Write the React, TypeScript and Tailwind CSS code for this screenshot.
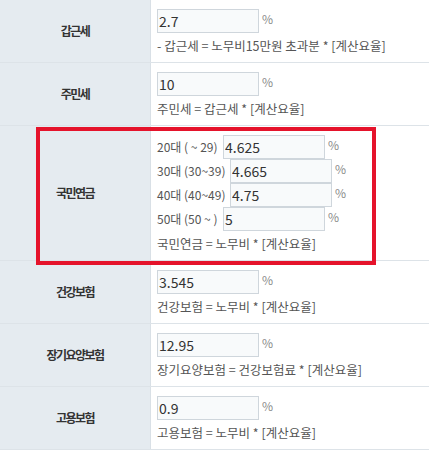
import React from "react";

type Row = {
  label: string;
  value?: string;
  rates?: { age: string; value: string; wide?: boolean }[];
  note: string;
};

const rows: Row[] = [
  { label: "갑근세", value: "2.7", note: "- 갑근세 = 노무비15만원 초과분 * [계산요율]" },
  { label: "주민세", value: "10", note: "주민세 = 갑근세 * [계산요율]" },
  {
    label: "국민연금",
    rates: [
      { age: "20대 ( ~ 29)", value: "4.625" },
      { age: "30대 (30~39)", value: "4.665", wide: true },
      { age: "40대 (40~49)", value: "4.75", wide: true },
      { age: "50대 (50 ~ )", value: "5" },
    ],
    note: "국민연금 = 노무비 * [계산요율]",
  },
  { label: "건강보험", value: "3.545", note: "건강보험 = 노무비 * [계산요율]" },
  { label: "장기요양보험", value: "12.95", note: "장기요양보험 = 건강보험료 * [계산요율]" },
  { label: "고용보험", value: "0.9", note: "고용보험 = 노무비 * [계산요율]" },
];

function RateInput({ value }: { value: string }) {
  return (
    <input
      defaultValue={value}
      className="h-[24px] w-[102px] border border-[#cfd6dc] bg-[#f8fafb] px-[1px] text-[14px] text-[#333] outline-none"
    />
  );
}

function Percent() {
  return <span className="ml-[3px] self-start pt-[2px] text-[12px] leading-[16px] text-[#8a8a8a]">%</span>;
}

export default function App() {
  return (
    <div
      className="relative w-[429px] bg-white text-[12px] text-[#555]"
      style={{ fontFamily: '"Noto Sans CJK KR", "Noto Sans", sans-serif' }}
    >
      {rows.map((row) => (
        <div key={row.label} className="flex border-b border-[#dde3e8]">
          <div className="flex w-[151px] shrink-0 items-center justify-center border-r border-[#d9e0e6] bg-[#e5ebf0] text-[12px] font-bold tracking-[-1.5px] text-[#333]">
            {row.label}
          </div>
          <div className="flex-1 px-[6px] pb-[8px] pt-[9px]">
            {row.rates ? (
              <div className="flex flex-col">
                {row.rates.map((r) => (
                  <div key={r.age} className="flex items-center">
                    <span className={`whitespace-nowrap ${r.wide ? "w-[73px]" : "w-[66px]"}`}>{r.age}</span>
                    <RateInput value={r.value} />
                    <Percent />
                  </div>
                ))}
              </div>
            ) : (
              <div className="flex items-center">
                <RateInput value={row.value ?? ""} />
                <Percent />
              </div>
            )}
            <p className="mt-[5px] text-[12.5px] leading-[16px]">{row.note}</p>
          </div>
        </div>
      ))}
      <div className="pointer-events-none absolute left-[36px] top-[127px] h-[138px] w-[340px] border-4 border-[#e5132b]" />
    </div>
  );
}
